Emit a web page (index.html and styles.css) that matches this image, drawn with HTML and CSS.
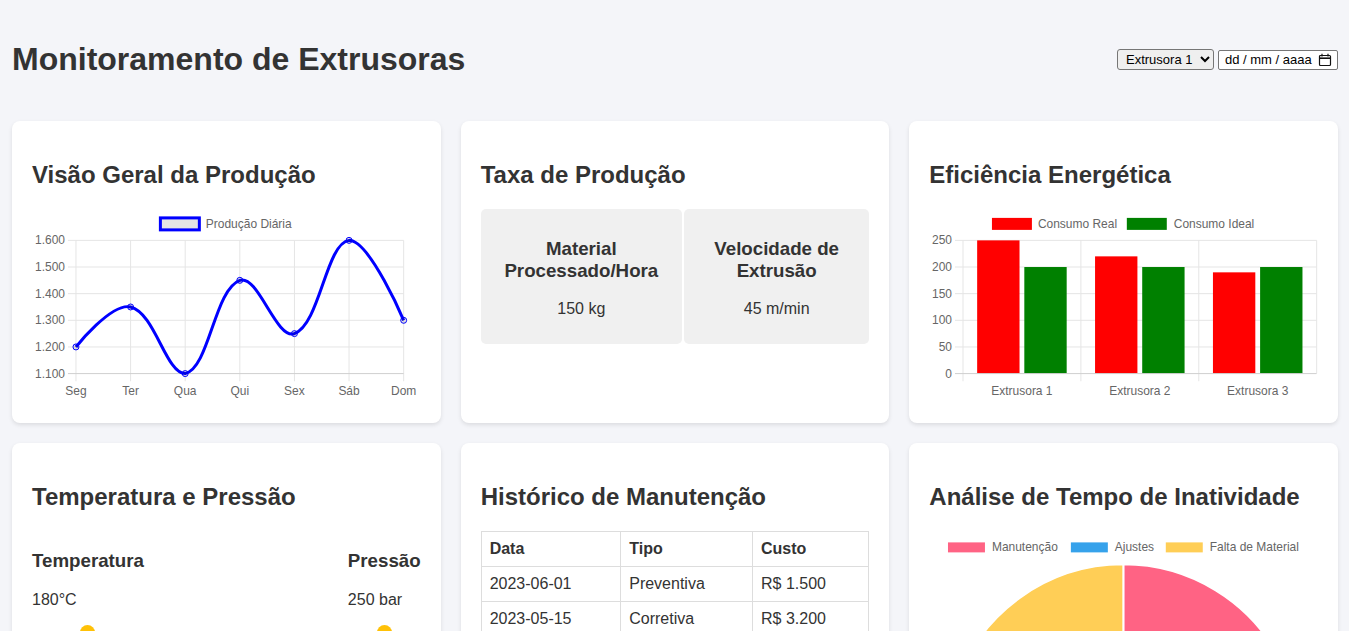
FILE: index.html
```html
<!DOCTYPE html>
<html lang="pt-BR">
<head>
<meta charset="utf-8">
<title>Monitoramento de Extrusoras</title>
<link rel="stylesheet" href="styles.css">
</head>
<body>
<div class="page">
  <header class="header">
    <h1>Monitoramento de Extrusoras</h1>
    <div class="controls">
      <select class="select">
        <option>Extrusora 1</option>
        <option>Extrusora 2</option>
        <option>Extrusora 3</option>
      </select>
      <label class="date">
        <span class="date-text">dd / mm / aaaa</span>
        <svg class="cal" width="14" height="14" viewBox="0 0 14 14"><rect x="1.5" y="2.5" width="11" height="10" rx="1" fill="none" stroke="#111" stroke-width="1.2"/><line x1="1.5" y1="5.2" x2="12.5" y2="5.2" stroke="#111" stroke-width="1.6"/><line x1="4" y1="0.8" x2="4" y2="3.5" stroke="#111" stroke-width="1.2"/><line x1="10" y1="0.8" x2="10" y2="3.5" stroke="#111" stroke-width="1.2"/></svg>
      </label>
    </div>
  </header>

  <main class="grid">
    <section class="card">
      <h2>Visão Geral da Produção</h2>
      <svg class="chart" viewBox="32 209.6 389 194.5">
        <g class="grid-lines">
          <line x1="68" y1="241" x2="404" y2="241"/>
          <line x1="68" y1="267.67" x2="404" y2="267.67"/>
          <line x1="68" y1="294.33" x2="404" y2="294.33"/>
          <line x1="68" y1="321" x2="404" y2="321"/>
          <line x1="68" y1="347.67" x2="404" y2="347.67"/>
          <line x1="76" y1="241" x2="76" y2="382"/>
          <line x1="130.67" y1="241" x2="130.67" y2="382"/>
          <line x1="185.33" y1="241" x2="185.33" y2="382"/>
          <line x1="240" y1="241" x2="240" y2="382"/>
          <line x1="294.67" y1="241" x2="294.67" y2="382"/>
          <line x1="349.33" y1="241" x2="349.33" y2="382"/>
          <line x1="404" y1="241" x2="404" y2="382"/>
        </g>
        <line class="axis-line" x1="68" y1="374.33" x2="404" y2="374.33"/>
        <g class="tick-y">
          <text x="65" y="241">1.600</text>
          <text x="65" y="267.67">1.500</text>
          <text x="65" y="294.33">1.400</text>
          <text x="65" y="321">1.300</text>
          <text x="65" y="347.67">1.200</text>
          <text x="65" y="374.33">1.100</text>
        </g>
        <g class="tick-x">
          <text x="76" y="392">Seg</text>
          <text x="130.67" y="392">Ter</text>
          <text x="185.33" y="392">Qua</text>
          <text x="240" y="392">Qui</text>
          <text x="294.67" y="392">Sex</text>
          <text x="349.33" y="392">Sáb</text>
          <text x="404" y="392">Dom</text>
        </g>
        <rect x="160.5" y="218.5" width="39" height="12" fill="rgba(0,0,0,0.1)" stroke="#0000ff" stroke-width="3"/>
        <text class="legend" x="206" y="224.5">Produção Diária</text>
        <path class="line" d="M76,347.67 C76,347.67 111.43,302.98 130.67,307.67 C155.16,313.64 165.93,374.33 185.33,374.33 C209.67,368.39 214.37,290.38 240,281 C258.10,274.38 276.57,340.95 294.67,334.33 C320.30,324.95 326.26,243.81 349.33,241 C369.99,241 404,321 404,321"/>
        <g class="pts">
          <circle cx="76" cy="347.67" r="3"/>
          <circle cx="130.67" cy="307.67" r="3"/>
          <circle cx="185.33" cy="374.33" r="3"/>
          <circle cx="240" cy="281" r="3"/>
          <circle cx="294.67" cy="334.33" r="3"/>
          <circle cx="349.33" cy="241" r="3"/>
          <circle cx="404" cy="321" r="3"/>
        </g>
      </svg>
    </section>

    <section class="card">
      <h2>Taxa de Produção</h2>
      <div class="rates">
        <div class="rate">
          <h3>Material Processado/Hora</h3>
          <p>150 kg</p>
        </div>
        <div class="rate">
          <h3>Velocidade de Extrusão</h3>
          <p>45 m/min</p>
        </div>
      </div>
    </section>

    <section class="card">
      <h2>Eficiência Energética</h2>
      <svg class="chart" viewBox="929 209.6 389 194.5">
        <g class="grid-lines">
          <line x1="955" y1="241" x2="1317" y2="241"/>
          <line x1="955" y1="267.67" x2="1317" y2="267.67"/>
          <line x1="955" y1="294.33" x2="1317" y2="294.33"/>
          <line x1="955" y1="321" x2="1317" y2="321"/>
          <line x1="955" y1="347.67" x2="1317" y2="347.67"/>
          <line x1="963" y1="241" x2="963" y2="382"/>
          <line x1="1081" y1="241" x2="1081" y2="382"/>
          <line x1="1199" y1="241" x2="1199" y2="382"/>
          <line x1="1317" y1="241" x2="1317" y2="374"/>
        </g>
        <g class="tick-y">
          <text x="952" y="241">250</text>
          <text x="952" y="267.67">200</text>
          <text x="952" y="294.33">150</text>
          <text x="952" y="321">100</text>
          <text x="952" y="347.67">50</text>
          <text x="952" y="374.33">0</text>
        </g>
        <g class="tick-x">
          <text x="1022" y="392">Extrusora 1</text>
          <text x="1140" y="392">Extrusora 2</text>
          <text x="1258" y="392">Extrusora 3</text>
        </g>
        <rect class="bar-red" x="977.2" y="241" width="42.4" height="133.33"/>
        <rect class="bar-green" x="1024.4" y="267.67" width="42.4" height="106.67"/>
        <rect class="bar-red" x="1095.2" y="257" width="42.4" height="117.33"/>
        <rect class="bar-green" x="1142.4" y="267.67" width="42.4" height="106.67"/>
        <rect class="bar-red" x="1213.2" y="273" width="42.4" height="101.33"/>
        <rect class="bar-green" x="1260.4" y="267.67" width="42.4" height="106.67"/>
        <line class="axis-line" x1="955" y1="374.33" x2="1317" y2="374.33"/>
        <rect class="bar-red" x="992" y="218.5" width="40" height="12"/>
        <text class="legend" x="1038" y="224.5">Consumo Real</text>
        <rect class="bar-green" x="1127" y="218.5" width="40" height="12"/>
        <text class="legend" x="1174" y="224.5">Consumo Ideal</text>
      </svg>
    </section>

    <section class="card">
      <h2>Temperatura e Pressão</h2>
      <div class="gauges">
        <div class="gauge">
          <h3>Temperatura</h3>
          <p>180°C</p>
          <div class="knob"></div>
        </div>
        <div class="gauge">
          <h3>Pressão</h3>
          <p>250 bar</p>
          <div class="knob"></div>
        </div>
      </div>
    </section>

    <section class="card">
      <h2>Histórico de Manutenção</h2>
      <table class="table">
        <thead>
          <tr><th class="c-date">Data</th><th class="c-type">Tipo</th><th>Custo</th></tr>
        </thead>
        <tbody>
          <tr><td>2023-06-01</td><td>Preventiva</td><td>R$ 1.500</td></tr>
          <tr><td>2023-05-15</td><td>Corretiva</td><td>R$ 3.200</td></tr>
        </tbody>
      </table>
    </section>

    <section class="card">
      <h2>Análise de Tempo de Inatividade</h2>
      <svg class="pie" viewBox="929 530.6 389 389">
        <rect x="947" y="541" width="39" height="12" fill="#ff6384" stroke="#fff" stroke-width="2"/>
        <text class="legend" x="992" y="547">Manutenção</text>
        <rect x="1070" y="541" width="39" height="12" fill="#36a2eb" stroke="#fff" stroke-width="2"/>
        <text class="legend" x="1115" y="547">Ajustes</text>
        <rect x="1165" y="541" width="39" height="12" fill="#ffce56" stroke="#fff" stroke-width="2"/>
        <text class="legend" x="1210" y="547">Falta de Material</text>
        <g class="slices">
          <path fill="#ff6384" d="M1123.5,741 L1123.5,564 A177,177 0 0 1 1266.7,845 Z"/>
          <path fill="#36a2eb" d="M1123.5,741 L1266.7,845 A177,177 0 0 1 1019.5,884.2 Z"/>
          <path fill="#ffce56" d="M1123.5,741 L1019.5,884.2 A177,177 0 0 1 1123.5,564 Z"/>
        </g>
      </svg>
    </section>
  </main>
</div>
</body>
</html>
```

FILE: styles.css
```css
* { box-sizing: border-box; }

body {
  margin: 0;
  background: #f4f5f9;
  color: #333;
  font-family: "Liberation Sans", Arial, sans-serif;
}

.page {
  padding: 20px 11px 20px 12px;
}

.header {
  display: flex;
  justify-content: space-between;
  align-items: center;
  margin-bottom: 21px;
}

.header h1 {
  margin: 21.44px 0;
  font-size: 32px;
  font-weight: bold;
  color: #333;
}

.controls {
  display: flex;
  align-items: center;
  gap: 4px;
}

.select {
  height: 21px;
  width: 97px;
  font-family: "Liberation Sans", Arial, sans-serif;
  font-size: 13px;
  color: #000;
  background: #efefef;
  border: 1px solid #767676;
  border-radius: 3px;
  padding: 0 2px 0 4px;
}

.date {
  display: flex;
  align-items: center;
  justify-content: space-between;
  height: 20px;
  width: 120px;
  padding: 0 5px 0 6px;
  background: #fff;
  border: 1px solid #767676;
  border-radius: 2px;
  font-size: 13px;
  color: #000;
}

.cal { display: block; }

.grid {
  display: grid;
  grid-template-columns: repeat(3, 1fr);
  gap: 20px;
}

.card {
  background: #fff;
  border-radius: 8px;
  padding: 20px;
  box-shadow: 0 2px 4px rgba(0, 0, 0, 0.1);
  overflow: hidden;
}

.card h2 {
  margin: 20px 0;
  font-size: 24px;
  font-weight: bold;
  color: #333;
}

.chart, .pie {
  display: block;
  width: 100%;
  height: auto;
}

.grid-lines line {
  stroke: #e5e5e5;
  stroke-width: 1;
}

.axis-line {
  stroke: #d0d0d0;
  stroke-width: 1;
}

.tick-y text, .tick-x text, .legend {
  font-family: "Liberation Sans", Arial, sans-serif;
  font-size: 12px;
  fill: #666;
  dominant-baseline: central;
}

.tick-y text { text-anchor: end; }
.tick-x text { text-anchor: middle; }

.line {
  fill: none;
  stroke: #0000ff;
  stroke-width: 3;
}

.pts circle {
  fill: rgba(0, 0, 0, 0.1);
  stroke: #0000ff;
  stroke-width: 1;
}

.bar-red { fill: #ff0000; }
.bar-green { fill: #008000; }

.slices path {
  stroke: #fff;
  stroke-width: 2;
}

.rates {
  display: grid;
  grid-template-columns: 201fr 185fr;
  gap: 2px;
}

.rate {
  background: #f0f0f0;
  border-radius: 5px;
  padding: 10px 14px;
  text-align: center;
}

.rate h3 {
  margin: 18.72px 0;
  font-size: 18.72px;
  font-weight: bold;
}

.rate p {
  margin: 16px 0;
  font-size: 16px;
}

.gauges {
  display: flex;
  justify-content: space-between;
}

.gauge h3 {
  margin: 18.72px 0;
  font-size: 18.72px;
  font-weight: bold;
}

.gauge p {
  margin: 16px 0;
  font-size: 16px;
}

.knob {
  width: 15px;
  height: 15px;
  margin: 0 auto;
  border-radius: 50%;
  background: #ffc107;
}

.table {
  width: 100%;
  border-collapse: collapse;
  font-size: 16px;
}

.table th, .table td {
  border: 1px solid #ddd;
  padding: 8px;
  text-align: left;
}

.table th { font-weight: bold; }

.c-date { width: 36%; }
.c-type { width: 34%; }
```
